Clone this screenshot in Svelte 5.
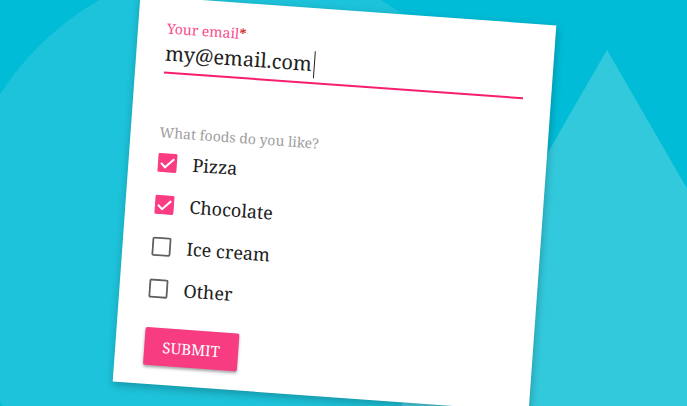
<script>
  let email = $state('my@email.com');
  let foods = $state([
    { name: 'Pizza', checked: true },
    { name: 'Chocolate', checked: true },
    { name: 'Ice cream', checked: false },
    { name: 'Other', checked: false }
  ]);
</script>

<main class="stage">
  <svg class="backdrop" viewBox="0 0 687 406" preserveAspectRatio="xMidYMid slice" aria-hidden="true">
    <circle cx="240" cy="248" r="285" fill="#1dc3da" />
    <path d="M607 50L865 497H349z" fill="#33c9dd" />
    <path d="M403 403L401 406H480z" fill="#4acfe1" />
  </svg>

  <form class="card" onsubmit={(e) => e.preventDefault()}>
    <label class="field-label" for="email">Your email<span class="required">*</span></label>
    <div class="field">
      <input id="email" class="email" type="text" inputmode="email" spellcheck="false" required bind:value={email} />
      <span class="caret"></span>
    </div>

    <fieldset class="foods">
      <legend>What foods do you like?</legend>
      {#each foods as food}
        <label class="option">
          <input type="checkbox" bind:checked={food.checked} />
          <svg class="box" viewBox="0 0 20 20" aria-hidden="true">
            {#if food.checked}
              <rect x="0.5" y="0.5" width="19" height="19" rx="1.5" fill="#fa3c82" />
              <path d="M3.6 10.4L7.8 14.5L16.5 5.8" fill="none" stroke="#fff" stroke-width="2" />
            {:else}
              <rect x="1.4" y="1.4" width="17.2" height="17.2" rx="1" fill="#fff" stroke="#606060" stroke-width="1.8" />
            {/if}
          </svg>
          <span>{food.name}</span>
        </label>
      {/each}
    </fieldset>

    <button class="submit" type="submit">SUBMIT</button>
  </form>
</main>

<style>
  .stage {
    position: relative;
    display: flex;
    align-items: center;
    justify-content: center;
    box-sizing: border-box;
    height: 100vh;
    padding-right: 18px;
    overflow: hidden;
    background: #00bcd7;
    color: #212121;
    font-family: 'Noto Serif', 'DejaVu Serif Condensed', 'DejaVu Serif', serif;
  }

  .backdrop {
    position: absolute;
    inset: 0;
    width: 100%;
    height: 100%;
  }

  .card {
    position: relative;
    display: flex;
    flex-direction: column;
    flex-shrink: 0;
    box-sizing: border-box;
    width: 100%;
    max-width: 417px;
    padding: 22px 28px 19px 29px;
    background: #fff;
    box-shadow: 1px 3px 8px rgba(0, 0, 0, 0.25);
    transform: rotate(4.1deg);
  }

  .field-label {
    font-size: 14px;
    line-height: 18px;
    color: #fa4a8b;
  }

  .required {
    color: #d32f2f;
    font-weight: bold;
  }

  .field {
    display: flex;
    align-items: center;
    height: 32px;
    padding-bottom: 2px;
    border-bottom: 2px solid #f71e6d;
  }

  .email {
    field-sizing: content;
    min-width: 20px;
    max-width: 100%;
    padding: 0 2px 0 0;
    border: 0;
    outline: 0;
    background: none;
    color: inherit;
    font-family: inherit;
    font-size: 20px;
    line-height: 28px;
  }

  .caret {
    width: 1px;
    height: 27px;
    background: #212121;
  }

  .foods {
    display: flex;
    flex-direction: column;
    min-width: 0;
    margin: 49px 0 18px;
    padding: 0;
    border: 0;
  }

  legend {
    padding: 0;
    font-size: 14px;
    line-height: 19px;
    color: #9e9e9e;
  }

  .option {
    position: relative;
    display: flex;
    align-items: center;
    gap: 15px;
    height: 42px;
    font-size: 18px;
    line-height: 24px;
  }

  .option input {
    position: absolute;
    width: 20px;
    height: 20px;
    margin: 0;
    opacity: 0;
  }

  .box {
    width: 20px;
    height: 20px;
  }

  .submit {
    align-self: flex-start;
    min-width: 94px;
    height: 38px;
    padding: 0 16px;
    border: 0;
    border-radius: 2px;
    background: #f73c81;
    box-shadow: 0 2px 3px rgba(0, 0, 0, 0.35);
    color: #fff;
    font-family: inherit;
    font-size: 15px;
    line-height: 20px;
  }
</style>
